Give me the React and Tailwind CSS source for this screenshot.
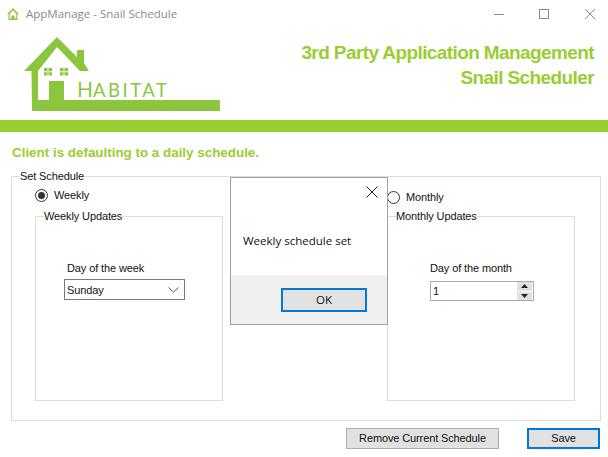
import React from 'react'

const segoe = { fontFamily: '"Open Sans", "Noto Sans", sans-serif' }
const arial = { fontFamily: '"Liberation Sans", Arial, sans-serif' }

function HabitatLogo() {
  return (
    <svg width="200" height="78" viewBox="0 0 200 78" className="block shrink-0">
      <g fill="#8cc63f">
        <path d="M4 37 L37 3 L57 23 L57 16 L64 16 L64 29 L69 37 L60 37 L37 13 L18 37 Z" />
        <path d="M11.500 36 L18 36 L18 66 L29 66 L29 47 L44 47 L44 66 L200 66 L200 77 L12 77 Z" />
        <path fillRule="evenodd" d="M24 34 H32 V41.500 H24 Z M27.500 34 V41.500 H28.500 V34 Z M24 37.300 V38.300 H32 V37.300 Z" />
        <path fillRule="evenodd" d="M40 34 H48 V41.500 H40 Z M43.500 34 V41.500 H44.500 V34 Z M40 37.300 V38.300 H48 V37.300 Z" />
        <text x="57" y="63" fontFamily="Lato, sans-serif" fontSize="21" letterSpacing="0.6">H</text>
        <text x="73" y="63" fontFamily="Lato, sans-serif" fontSize="18.500" letterSpacing="2.500">ABITAT</text>
      </g>
    </svg>
  )
}

function WindowButtons() {
  return (
    <div className="flex items-center pr-[13px] text-[#8a8a8a]">
      <svg width="10" height="10" viewBox="0 0 10 10" className="block"><path d="M0 5.500H10" stroke="currentColor" /></svg>
      <svg width="10" height="10" viewBox="0 0 10 10" className="ml-[35px] block"><rect x="0.500" y="0.500" width="9" height="9" fill="none" stroke="currentColor" /></svg>
      <svg width="10" height="10" viewBox="0 0 10 10" className="ml-[36px] block"><path d="M0 0L10 10M10 0L0 10" stroke="currentColor" /></svg>
    </div>
  )
}

function GroupBox({ title, className, children }) {
  return (
    <fieldset className={`border border-[#dcdcdc] ${className}`}>
      <legend className="ml-2 px-0 text-[11px] leading-[16px] tracking-[-0.12px] text-[#111]">{title}</legend>
      {children}
    </fieldset>
  )
}

function Radio({ label, checked }) {
  return (
    <div className="flex h-4 items-center text-[11px] tracking-[-0.12px] text-[#111]">
      <span className="flex h-[13px] w-[13px] items-center justify-center rounded-full border border-[#333] bg-white">
        {checked ? <span className="h-[7px] w-[7px] rounded-full bg-[#333]" /> : null}
      </span>
      <span className="ml-[6px]">{label}</span>
    </div>
  )
}

function Spinner() {
  return (
    <div className="flex h-[18px] w-[15px] flex-col gap-px">
      <div className="flex flex-1 items-center justify-center bg-[#e1e1e1]">
        <svg width="7" height="4" viewBox="0 0 7 4" className="block"><path d="M3.500 0L7 4H0Z" fill="#222" /></svg>
      </div>
      <div className="flex flex-1 items-center justify-center bg-[#e1e1e1]">
        <svg width="7" height="4" viewBox="0 0 7 4" className="block"><path d="M0 0H7L3.500 4Z" fill="#222" /></svg>
      </div>
    </div>
  )
}

export default function App() {
  return (
    <div className="relative h-[457px] w-[608px] overflow-hidden bg-white" style={arial}>
      {/* title bar */}
      <div className="flex h-[27px] items-center justify-between">
        <div className="flex items-center pl-[7px]">
          <svg width="12" height="12" viewBox="0 0 12 12" className="block">
            <path d="M6 0L12 6H10.500V12H1.500V6H0Z" fill="#8cc63f" />
            <path d="M6 2.300L9.300 5.700V10.500H7.500V7.500H4.500V10.500H2.700V5.700Z" fill="#fff" />
          </svg>
          <span className="ml-[7px] text-[11.500px] text-[#8b8b8b]" style={segoe}>AppManage - Snail Schedule</span>
        </div>
        <WindowButtons />
      </div>

      {/* header */}
      <div className="flex h-[93px] justify-between pl-5 pr-[14px] pt-[7px]">
        <HabitatLogo />
        <div className="pt-[6px] text-right text-[19px] font-bold leading-[25px] tracking-[-0.6px] text-[#9acd32]">
          <div>3rd Party Application Management</div>
          <div>Snail Scheduler</div>
        </div>
      </div>
      <div className="h-3 bg-[#9acd32]" />

      <div className="mt-[13px] pl-3 text-[13.400px] font-bold leading-4 text-[#9acd32]">
        Client is defaulting to a daily schedule.
      </div>

      {/* schedule */}
      <GroupBox title="Set Schedule" className="ml-[11px] mt-[7px] h-[253px] w-[590px]">
        <div className="flex pl-[23px]">
          <div className="w-[188px]">
            <div className="mt-[3px]">
              <Radio label="Weekly" checked />
            </div>
            <GroupBox title="Weekly Updates" className="mt-[5px] h-[193px] w-[188px]">
              <div className="pl-[28px] pt-[36px] text-[11px] leading-4 tracking-[-0.12px] text-[#111]">
                <div className="pl-[3px]">Day of the week</div>
                <div className="mt-[3px] flex h-[21px] w-[121px] items-center justify-between border border-[#7a7a7a] pl-[2px] pr-[5px]">
                  <span>Sunday</span>
                  <svg width="11" height="6" viewBox="0 0 11 6" className="block"><path d="M0.500 0.500L5.500 5L10.500 0.500" fill="none" stroke="#555" /></svg>
                </div>
              </div>
            </GroupBox>
          </div>
          <div className="ml-[164px] w-[188px]">
            <div className="mt-[5px]">
              <Radio label="Monthly" />
            </div>
            <GroupBox title="Monthly Updates" className="mt-[3px] h-[193px] w-[188px]">
              <div className="pl-[42px] pt-[36px] text-[11px] leading-4 tracking-[-0.12px] text-[#111]">
                <div>Day of the month</div>
                <div className="mt-[5px] flex h-[20px] w-[104px] items-center justify-between border border-[#a9a9a9] pl-[2px] pr-px">
                  <span>1</span>
                  <Spinner />
                </div>
              </div>
            </GroupBox>
          </div>
        </div>
      </GroupBox>

      {/* actions */}
      <div className="mt-[7px] flex justify-end gap-7 pr-2 text-[11px] tracking-[-0.12px] text-[#111]">
        <button type="button" className="h-[21px] w-[153px] border border-[#adadad] bg-[#e1e1e1]">
          Remove Current Schedule
        </button>
        <button type="button" className="h-[21px] w-[73px] border-2 border-[#0078d7] bg-[#e1e1e1]">
          Save
        </button>
      </div>

      {/* message box */}
      <div className="absolute left-[230px] top-[177px] flex h-[148px] w-[158px] flex-col border border-[#a0a0a0] bg-white text-[11.500px] text-[#111]" style={segoe}>
        <div className="flex justify-end pr-[9px] pt-[8px]">
          <svg width="12" height="12" viewBox="0 0 12 12" className="block"><path d="M0.500 0.500L11.500 11.500M11.500 0.500L0.500 11.500" stroke="#222" /></svg>
        </div>
        <div className="flex-1 pl-3 pt-[35px] leading-4">Weekly schedule set</div>
        <div className="flex h-[49px] justify-end bg-[#f0f0f0] pr-5 pt-[13px]">
          <button type="button" className="h-[24px] w-[86px] border-2 border-[#0078d7] bg-[#e1e1e1]">
            OK
          </button>
        </div>
      </div>
    </div>
  )
}
